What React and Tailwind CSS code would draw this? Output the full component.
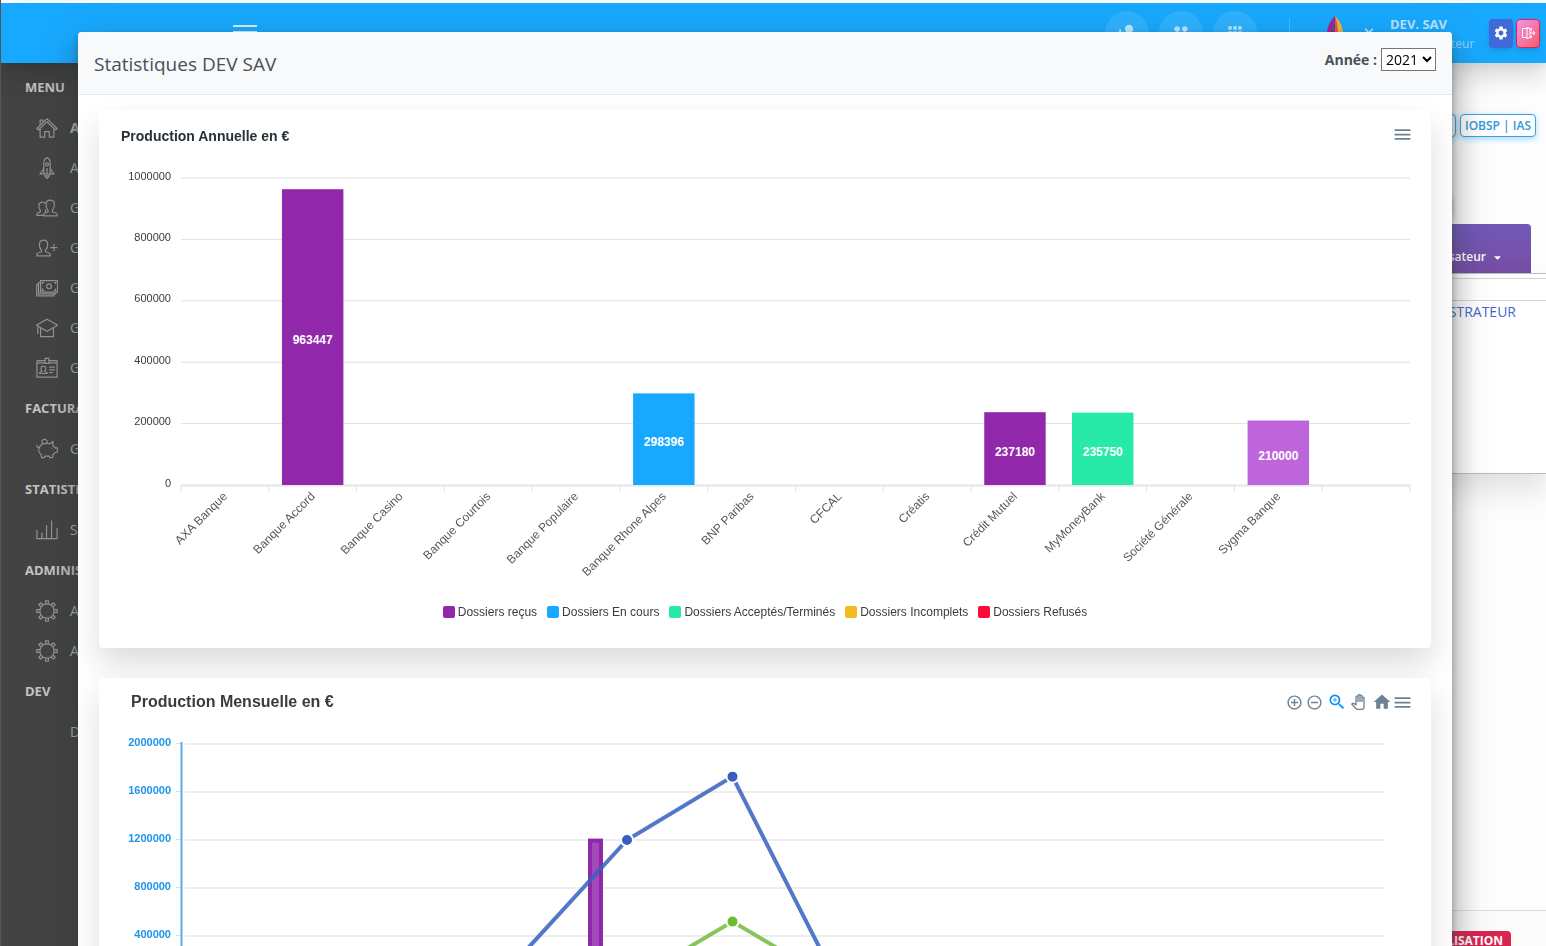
import { useState } from "react";
import {
  MdAddCircleOutline,
  MdApps,
  MdHome,
  MdMenu,
  MdOutlinePanTool,
  MdRemoveCircleOutline,
  MdSettings,
  MdZoomIn,
} from "react-icons/md";
import { IoMdPeople, IoMdPersonAdd } from "react-icons/io";
import { FaCaretDown, FaChevronDown } from "react-icons/fa";

// thin line icons of the side menu, 24x24 grid
const ICONS = {
  home: (
    <>
      <path d="M1 12.500 12 2l11 10.500-1.600 1.600L12 5.200l-9.400 8.900z" />
      <path d="M4.500 12.500V22h5v-6h5v6h5v-9.500M4.500 9V3.500h3v2.600" />
    </>
  ),
  rocket: (
    <>
      <path d="M8.500 18.500V7C8.500 4 10 1.500 12 0.500 14 1.500 15.500 4 15.500 7v11.500z" />
      <path d="M8.500 12.500 4.500 18.500h4M15.500 12.500l4 6h-4M12 12v6.500" />
      <circle cx="12" cy="8" r="1.600" />
      <path d="M9.500 20.500h5L12 23.500z" />
    </>
  ),
  users: (
    <>
      <path d="M8.500 20.500v-1.800c0-1 1.500-1.500 4-2.200 1-.4 1-1.600.2-2.600-1.600-2-2-4.500-1.700-6.900C11.300 4.500 13 3.500 15.500 3.500s4.200 1 4.500 3.500c.3 2.400-.1 4.900-1.700 6.900-.8 1-.8 2.200.2 2.600 2.500.7 4.500 1.200 4.500 2.200v1.800z" />
      <path d="M8.500 20H1v-1.500c0-1 1.300-1.300 3.200-1.900 1-.4.9-1.400.2-2.300C3.200 12.800 3 10.800 3.100 9 3.300 7 4.800 5.500 7 5.500c1.600 0 2.700.6 3.400 1.700M10.800 13.500c-.8 1.200-1 2-.3 2.800" />
    </>
  ),
  userPlus: (
    <>
      <path d="M1 20.500v-1.800c0-1 1.800-1.600 4.300-2.300 1-.4 1-1.600.2-2.600C4 12 3.600 9.400 3.900 7 4.200 4.500 5.900 3.500 8.200 3.500s4.100 1 4.400 3.500c.3 2.400-.1 5-1.700 6.800-.8 1-.8 2.200.2 2.600 2.500.7 4.400 1.300 4.400 2.300v1.800z" />
      <path d="M15.500 11.500h8M19.500 7.500v8" />
    </>
  ),
  cash: (
    <>
      <path d="M5 4h18.500v12.500H5z" />
      <path d="M5 6H2.800v12.500h18.700v-2M2.800 8H.8v12.500h18.700v-2" />
      <circle cx="14.200" cy="10.200" r="2.600" />
      <path d="M7 8V6h2M21.500 8V6h-2M7 12.500v2h2M21.500 12.500v2h-2" />
    </>
  ),
  school: (
    <>
      <path d="M12 2.500 23.500 9 12 15.500.5 9z" />
      <path d="M5 12v9.500h14V12M2 10v8.500" />
    </>
  ),
  badge: (
    <>
      <path d="M1 4h9M14 4h9v18H1V4M1 6.500h9M14 6.500h9M10 1.500h4v5.500h-4z" />
      <path d="M4 18v-1l2.500-1.200c-1-1.300-1.300-2.800-1.100-4C5.600 10.500 6.500 10 8 10s2.400.5 2.600 1.800c.2 1.200-.1 2.700-1.100 4L12 17v1zM14.500 11h6M14.500 14h6M14.500 17h4" />
    </>
  ),
  piggy: (
    <>
      <path d="M4 9.500C5.500 7 8.500 5.800 11.500 5.800c1.200 0 2.400.1 3.500.5L18.500 4v4.200c1 .8 1.700 1.600 2.200 2.600h2.500v5h-2.500c-.6 1-1.300 1.700-2.200 2.300l-.6 3.400h-3l-.6-1.700h-4.500l-.6 1.700h-3l-.8-3.700C3 16 2.300 12.500 4 9.500z" />
      <path d="M7.500 6.400C5.500 3.800 7 1.500 9.200 1.500s3.600 1.900 2.800 4.200M3.600 10.500C1.500 10.800.5 9.300 1 7.500M17 10.500v1" />
    </>
  ),
  graph: <path d="M1 12v9.500h22V9.500M6.500 21.500V15M11.500 21.500V6.500M17 21.500V1.500" />,
  gear: (
    <>
      <circle cx="12" cy="12" r="7.800" />
      {[0, 45, 90, 135, 180, 225, 270, 315].map((a) => (
        <path key={a} transform={`rotate(${a} 12 12)`} d="M10.500 4.200V.8h3v3.400" />
      ))}
    </>
  ),
};

const MENU = [
  {
    title: "MENU",
    items: [
      { icon: "home", label: "Accueil", active: true },
      { icon: "rocket", label: "Alertes" },
      { icon: "users", label: "Gestion" },
      { icon: "userPlus", label: "Gestion" },
      { icon: "cash", label: "Gestion" },
      { icon: "school", label: "Gestion" },
      { icon: "badge", label: "Gestion" },
    ],
  },
  { title: "FACTURATION", items: [{ icon: "piggy", label: "Gestion" }] },
  { title: "STATISTIQUES", items: [{ icon: "graph", label: "Stats" }] },
  {
    title: "ADMINISTRATION",
    items: [
      { icon: "gear", label: "Admin" },
      { icon: "gear", label: "Admin" },
    ],
  },
  { title: "DEV", items: [{ label: "Dev" }] },
];

const BANKS = [
  { name: "AXA Banque" },
  { name: "Banque Accord", value: 963447, color: "#9128ac" },
  { name: "Banque Casino" },
  { name: "Banque Courtois" },
  { name: "Banque Populaire" },
  { name: "Banque Rhone Alpes", value: 298396, color: "#17a9ff" },
  { name: "BNP Paribas" },
  { name: "CFCAL" },
  { name: "Créatis" },
  { name: "Crédit Mutuel", value: 237180, color: "#9128ac" },
  { name: "MyMoneyBank", value: 235750, color: "#27e9a8" },
  { name: "Société Générale" },
  { name: "Sygma Banque", value: 210000, color: "#be65dc" },
  { name: "" },
];

const LEGEND = [
  { label: "Dossiers reçus", color: "bg-[#9128ac]" },
  { label: "Dossiers En cours", color: "bg-[#17a9ff]" },
  { label: "Dossiers Acceptés/Terminés", color: "bg-[#27e9a8]" },
  { label: "Dossiers Incomplets", color: "bg-[#f5b921]" },
  { label: "Dossiers Refusés", color: "bg-[#ff0a37]" },
];

function LineIcon({ name }) {
  return (
    <svg viewBox="0 0 24 24" className="size-[22px] fill-none stroke-[#919394] stroke-[1.3]">
      {ICONS[name]}
    </svg>
  );
}

function Header() {
  return (
    <header className="relative z-10 flex h-[60px] items-center bg-[#17a9ff] pr-[6px] pl-[232px] shadow-[0_8px_35px_rgba(4,9,20,0.08),0_15px_22px_rgba(4,9,20,0.08),0_4px_8px_rgba(4,9,20,0.05)]">
      <button aria-label="Menu" className="mb-[2px] flex w-6 flex-col gap-1">
        <span className="h-[2px] w-full bg-white/80" />
        <span className="h-[2px] w-full bg-white/80" />
        <span className="h-[2px] w-full bg-white/80" />
      </button>
      <div className="ml-auto flex gap-[10px] text-white/70">
        <button aria-label="Ajouter" className="flex size-11 items-center justify-center rounded-full bg-white/10">
          <IoMdPersonAdd size={22} />
        </button>
        <button aria-label="Contacts" className="flex size-11 items-center justify-center rounded-full bg-white/10">
          <IoMdPeople size={24} />
        </button>
        <button aria-label="Applications" className="flex size-11 items-center justify-center rounded-full bg-white/10">
          <MdApps size={20} />
        </button>
      </div>
      <div className="ml-8 h-[30px] w-px bg-white/20" />
      <button aria-label="Compte" className="ml-6 flex items-center gap-2">
        <svg viewBox="0 0 42 36" className="h-9 w-[42px]">
          <path d="M21 1c-5 5-8 11-8 18 0 5 3 9 8 13z" fill="#a3238e" />
          <path d="M21 1c-3 7-4 14-3 20 .5 4 1.500 8 3 11z" fill="#6a3fa0" />
          <path d="M21 1c5 5 8 11 8 18 0 5-3 9-8 13z" fill="#f5b335" />
          <path d="M21 1c2 5 3 11 3 18 0 5-1 9-3 13z" fill="#e2574c" />
        </svg>
        <FaChevronDown size={10} className="mb-1 text-white/70" />
      </button>
      <div className="ml-4 w-[84px] pt-[2px] text-white/70">
        <div className="text-[13px] leading-5 font-bold">DEV. SAV</div>
        <div className="text-xs leading-5 text-white/50">Administrateur</div>
      </div>
      <div className="ml-[15px] flex gap-[3px]">
        <button
          aria-label="Paramètres"
          className="flex h-[29px] w-6 items-center justify-center rounded bg-[#3f6ad8] text-white shadow-md"
        >
          <MdSettings size={16} />
        </button>
        <button
          aria-label="Déconnexion"
          className="flex h-[29px] w-6 items-center justify-center rounded border border-[#d92550] bg-linear-to-br from-[#f093e8] to-[#f5576c] shadow-md"
        >
          <svg viewBox="0 0 16 16" className="size-4 fill-none stroke-white stroke-1">
            <path d="M7 3.500H2.500v9H7M7 2.500l3 1v9l-3 1zM10 3.500h1.500v2M11.500 10.500v2H10M10 8h5M13 6l2 2-2 2" />
          </svg>
        </button>
      </div>
    </header>
  );
}

function Sidebar() {
  return (
    <nav className="w-[280px] shrink-0 bg-[#434343] pt-1">
      {MENU.map((group) => (
        <div key={group.title}>
          <h5 className="flex h-[41px] items-center pl-6 text-[13px] font-bold text-[#c4c4c4]">
            {group.title}
          </h5>
          <ul>
            {group.items.map((item, i) => (
              <li key={i}>
                <a
                  href="#"
                  className={`flex h-10 items-center gap-3 pl-[35px] text-sm text-[#b2b4b5] ${
                    item.active ? "font-bold" : ""
                  }`}
                >
                  <span className="size-[22px]">{item.icon && <LineIcon name={item.icon} />}</span>
                  {item.label}
                </a>
              </li>
            ))}
          </ul>
        </div>
      ))}
    </nav>
  );
}

function Page() {
  return (
    <main className="flex flex-1 flex-col bg-[#fdfdfd]">
      <div className="flex justify-end gap-1 pt-[51px] pr-[10px] text-xs leading-[21px] font-semibold text-[#3298dc]">
        <span className="rounded border border-[#3ba1e6] bg-white px-1 shadow-[0_2px_6px_rgba(23,169,255,0.4)]">
          COA
        </span>
        <span className="rounded border border-[#3ba1e6] bg-white px-1 shadow-[0_2px_6px_rgba(23,169,255,0.4)]">
          IOBSP | IAS
        </span>
      </div>
      <div className="flex justify-end pt-[58px] pr-[95px]">
        <button aria-label="Supprimer" className="h-5 w-24 rounded bg-[#d92550] shadow-[0_2px_6px_rgba(217,37,80,0.6)]" />
      </div>
      <div className="mt-[9px] mr-[15px] flex h-[49px] items-end justify-end rounded-t bg-linear-to-b from-[#7158b8] to-[#774ea4] pr-7 pb-[6px] text-white">
        <button className="flex items-center gap-[6px] text-xs leading-5 font-semibold">
          Utilisateur
          <FaCaretDown size={11} />
        </button>
      </div>
      <section className="h-[201px] border-y border-[#b9bcc0] bg-white shadow-[0_15px_30px_rgba(4,9,20,0.12)]">
        <div className="mt-1 h-[23px] border-y border-[#ccd4dc]" />
        <p className="pr-[30px] text-right text-sm leading-[22px] text-[#4469c8]">ADMINISTRATEUR</p>
      </section>
      <footer className="mt-auto flex h-[36px] shrink-0 items-start justify-end border-t border-[#dcdfe2] bg-[#fbfbfc] pt-5 pr-[35px]">
        <span className="rounded bg-[#d92550] px-2 text-xs leading-5 font-bold text-white">LOCALISATION</span>
      </footer>
    </main>
  );
}

function AnnualChart() {
  const left = 82;
  const right = 1311;
  const top = 16;
  const bottom = 323;
  const step = (right - left) / BANKS.length;
  const y = (v) => bottom - (v / 1000000) * (bottom - top);

  return (
    <svg viewBox="0 0 1332 430" className="w-full">
      {[1000000, 800000, 600000, 400000, 200000, 0].map((v) => (
        <g key={v}>
          <line x1={left} x2={right} y1={y(v)} y2={y(v)} stroke="#e0e0e0" />
          <text x="72" y={Math.floor(y(v)) + 2} textAnchor="end" fontSize="11" fill="#373d3f">
            {v}
          </text>
        </g>
      ))}
      <line x1={left} x2={right} y1={bottom + 1} y2={bottom + 1} stroke="#e0e0e0" />
      {BANKS.map((bank, i) => {
        const cx = left + step * (i + 0.5);
        return (
          <g key={i}>
            <line x1={left + step * i} x2={left + step * i} y1={bottom} y2={bottom + 7} stroke="#e0e0e0" />
            {bank.value && (
              <>
                <rect
                  x={cx - step * 0.35}
                  y={y(bank.value)}
                  width={step * 0.7}
                  height={bottom - y(bank.value)}
                  fill={bank.color}
                />
                <text
                  x={cx}
                  y={(bottom + y(bank.value)) / 2 + 7}
                  textAnchor="middle"
                  fontSize="12"
                  fontWeight="bold"
                  fill="#fff"
                >
                  {bank.value}
                </text>
              </>
            )}
            <text
              x={cx + 3}
              y={bottom + 12}
              transform={`rotate(-45 ${cx + 3} ${bottom + 12})`}
              textAnchor="end"
              fontSize="12"
              fill="#555a5c"
            >
              {bank.name}
            </text>
          </g>
        );
      })}
      <line x1={right} x2={right} y1={bottom} y2={bottom + 7} stroke="#e0e0e0" />
    </svg>
  );
}

function MonthlyChart() {
  const top = 18;
  const bottom = 258;
  const y = (v) => bottom - (v / 2000000) * (bottom - top);
  const x = (month) => 106 + month * 105.5;
  const total = [0, 0, 0, 240000, 1200000, 1728000, 0, 0, 0, 0, 0, 0];
  const accepted = [0, 0, 0, 0, 0, 520000, 0, 0, 0, 0, 0, 0];
  const points = (values) => values.map((v, i) => `${x(i)},${y(v)}`).join(" ");

  return (
    <svg viewBox="0 0 1332 300" className="w-full">
      {[2000000, 1600000, 1200000, 800000, 400000, 0].map((v) => (
        <g key={v}>
          <line x1="86" x2="1286" y1={y(v)} y2={y(v)} stroke="#e9e9e9" strokeWidth="1.500" />
          <line x1="77" x2="82" y1={y(v) - 0.5} y2={y(v) - 0.5} stroke="#cfe3f3" />
          <text x="72" y={y(v) + 2} textAnchor="end" fontSize="11" fontWeight="bold" fill="#1e93ea">
            {v}
          </text>
        </g>
      ))}
      <line x1="82.500" x2="82.500" y1="16" y2={bottom} stroke="#5fabdf" strokeWidth="2" />
      <rect
        x="491"
        y={y(1195000)}
        width="11"
        height={bottom - y(1195000)}
        fill="#a24bb8"
        stroke="#9128ac"
        strokeWidth="4"
      />
      <polyline points={points(accepted)} fill="none" stroke="#86c55e" strokeWidth="4" />
      <polyline points={points(total)} fill="none" stroke="#3560bf" strokeOpacity="0.850" strokeWidth="4" />
      {accepted.map((v, i) => (
        <circle key={i} cx={x(i)} cy={y(v)} r="6" fill="#6cbc2e" stroke="#fff" strokeWidth="2" />
      ))}
      {total.map((v, i) => (
        <circle key={i} cx={x(i)} cy={y(v)} r="6" fill="#3560bf" stroke="#fff" strokeWidth="2" />
      ))}
    </svg>
  );
}

function ChartCard({ children }) {
  return (
    <section className="rounded bg-white font-['Liberation_Sans',Arial,sans-serif] shadow-[0_16px_32px_rgba(4,9,20,0.14)]">
      {children}
    </section>
  );
}

function StatsModal() {
  const [year, setYear] = useState("2021");

  return (
    <div className="fixed inset-0 z-20 overflow-hidden pt-8 pr-[94px] pl-[78px]">
      <div
        role="dialog"
        aria-labelledby="stats-title"
        className="overflow-hidden rounded bg-white shadow-[0_12px_40px_rgba(52,58,64,0.3),0_21px_27px_rgba(52,58,64,0.3),0_9px_9px_rgba(0,0,0,0.05),0_4px_7px_rgba(52,58,64,0.3)]"
      >
        <div className="flex h-[63px] items-start justify-between border-b border-[#e4e8ec] bg-[#f8f9fb] px-4 pt-4 text-[#495057]">
          <h5 id="stats-title" className="text-[19px] leading-8">
            Statistiques DEV SAV
          </h5>
          <div className="flex items-center gap-1">
            <label htmlFor="year" className="text-sm font-bold">
              Année :
            </label>
            <select
              id="year"
              value={year}
              onChange={(e) => setYear(e.target.value)}
              className="h-[23px] w-[55px] border border-[#767676] bg-white text-sm text-black"
            >
              <option>2021</option>
              <option>2020</option>
            </select>
          </div>
        </div>
        <div className="flex flex-col gap-[30px] px-[21px] py-[15px]">
          <ChartCard>
            <div className="flex h-[52px] items-center justify-between pr-[18px] pl-[22px]">
              <h6 className="text-sm font-bold text-[#263238]">Production Annuelle en €</h6>
              <button aria-label="Exporter" className="mb-1 text-[#6e8192]">
                <MdMenu size={21} />
              </button>
            </div>
            <AnnualChart />
            <ul className="flex h-14 items-start justify-center gap-[10px] pt-3 text-xs text-[#373d3f]">
              {LEGEND.map((entry) => (
                <li key={entry.label} className="flex items-center gap-[3px]">
                  <span className={`size-3 rounded-xs ${entry.color}`} />
                  {entry.label}
                </li>
              ))}
            </ul>
          </ChartCard>
          <ChartCard>
            <div className="flex h-12 items-center justify-between pr-[18px] pl-8">
              <h6 className="text-base font-bold text-[#373d3f]">Production Mensuelle en €</h6>
              <div className="flex items-center text-[#6e8192]">
                <button aria-label="Agrandir">
                  <MdAddCircleOutline size={17} />
                </button>
                <button aria-label="Réduire" className="ml-[3px]">
                  <MdRemoveCircleOutline size={17} />
                </button>
                <button aria-label="Zoom de sélection" className="ml-1 text-[#008ffb]">
                  <MdZoomIn size={20} />
                </button>
                <button aria-label="Déplacer" className="ml-[3px]">
                  <MdOutlinePanTool size={16} />
                </button>
                <button aria-label="Réinitialiser" className="ml-[6px]">
                  <MdHome size={20} />
                </button>
                <button aria-label="Exporter">
                  <MdMenu size={21} />
                </button>
              </div>
            </div>
            <MonthlyChart />
          </ChartCard>
        </div>
      </div>
    </div>
  );
}

export default function App() {
  return (
    <div className="flex h-screen flex-col overflow-hidden border-l border-[#555] bg-white pt-[3px] font-['Open_Sans','Noto_Sans',sans-serif]">
      <Header />
      <div className="flex flex-1">
        <Sidebar />
        <Page />
      </div>
      <StatsModal />
    </div>
  );
}
